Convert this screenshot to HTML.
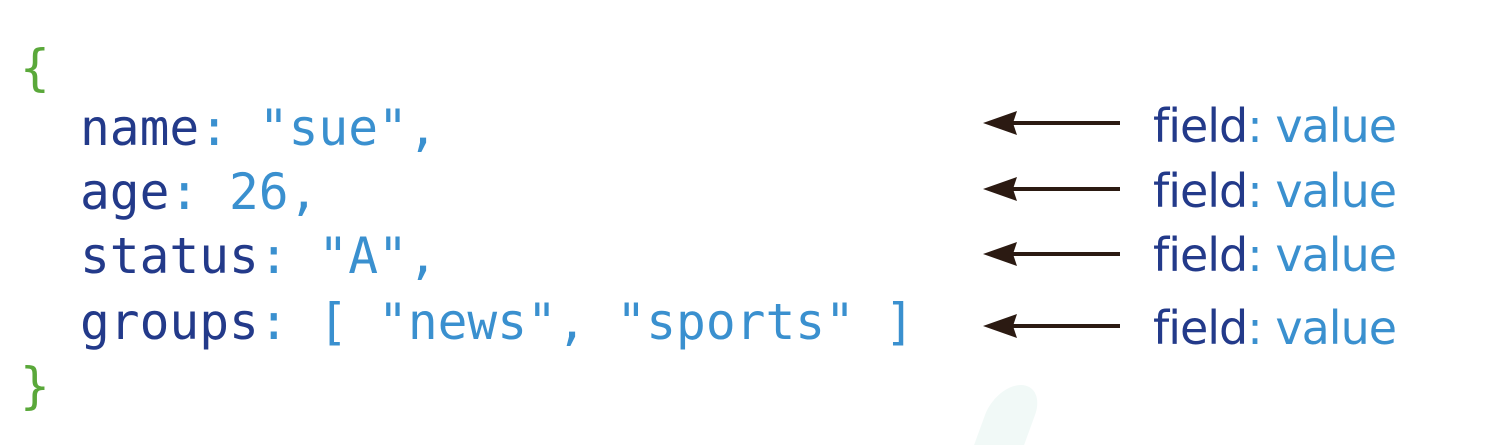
<!DOCTYPE html>
<html><head><style>
body{margin:0;width:1490px;height:418px;background:#fff;overflow:hidden;position:relative}
.c{position:absolute;left:0;font-family:"DejaVu Sans Mono","Liberation Mono",monospace;font-size:49.5px;white-space:pre;line-height:1;transform-origin:0 100%}
.k{color:#233a8a}.v{color:#3a90cf}.g{color:#5aa83a}
.f{position:absolute;left:1153px;font-family:"DejaVu Sans","Liberation Sans",sans-serif;font-size:46px;line-height:1;letter-spacing:-1px;white-space:pre}
.a{position:absolute;left:983px}
</style></head><body>
<div style="position:absolute;left:985px;top:385px;width:50px;height:60px;border-radius:50% 50% 0 0;background:#f1f9f7;transform:skewX(-20deg)"></div>
<div class="c g" style="left:20px;top:44px">{</div>
<div class="c" style="left:80px;top:104px"><span class="k">name</span><span class="v">: "sue",</span></div>
<div class="c" style="left:80px;top:168px"><span class="k">age</span><span class="v">: 26,</span></div>
<div class="c" style="left:80px;top:232px"><span class="k">status</span><span class="v">: "A",</span></div>
<div class="c" style="left:80px;top:298px"><span class="k">groups</span><span class="v">: [ "news", "sports" ]</span></div>
<div class="c g" style="left:20px;top:362px">}</div>

<svg class="a" style="top:110px" width="140" height="26"><path d="M30 13H137" stroke="#2b1a12" stroke-width="4"/><path d="M0 13L34 1L30 13L34 25Z" fill="#2b1a12"/></svg>
<svg class="a" style="top:176px" width="140" height="26"><path d="M30 13H137" stroke="#2b1a12" stroke-width="4"/><path d="M0 13L34 1L30 13L34 25Z" fill="#2b1a12"/></svg>
<svg class="a" style="top:241px" width="140" height="26"><path d="M30 13H137" stroke="#2b1a12" stroke-width="4"/><path d="M0 13L34 1L30 13L34 25Z" fill="#2b1a12"/></svg>
<svg class="a" style="top:313px" width="140" height="26"><path d="M30 13H137" stroke="#2b1a12" stroke-width="4"/><path d="M0 13L34 1L30 13L34 25Z" fill="#2b1a12"/></svg>

<div class="f" style="top:103px"><span class="k">field</span><span class="v">: value</span></div>
<div class="f" style="top:168px"><span class="k">field</span><span class="v">: value</span></div>
<div class="f" style="top:232px"><span class="k">field</span><span class="v">: value</span></div>
<div class="f" style="top:305px"><span class="k">field</span><span class="v">: value</span></div>
</body></html>
